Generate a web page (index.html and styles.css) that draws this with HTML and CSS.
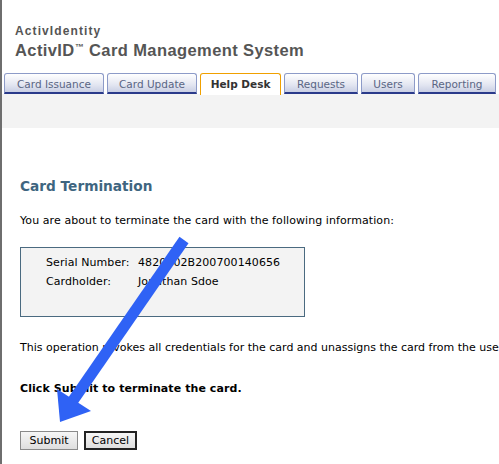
FILE: index.html
```html
<!DOCTYPE html>
<html>
<head>
<title>Card Termination</title>
<link rel="stylesheet" href="styles.css">
</head>
<body>
	<div class="page">
		<header class="brand">
			<div class="company">ActivIdentity</div>
			<div class="product">ActivID<sup>™</sup> Card Management System</div>
		</header>
		<nav class="tabs">
			<a class="tab" style="width:100px">Card Issuance</a>
			<a class="tab" style="width:90px">Card Update</a>
			<a class="tab active" style="width:81px">Help Desk</a>
			<a class="tab" style="width:74px">Requests</a>
			<a class="tab" style="width:54px">Users</a>
			<a class="tab" style="width:78px">Reporting</a>
			<a class="tab" style="width:40px"></a>
		</nav>
		<div class="band"></div>
		<section class="content">
			<h2>Card Termination</h2>
			<p>You are about to terminate the card with the following information:</p>
			<div class="infobox">
				<div class="row"><span class="key">Serial Number:</span><span>4820002B200700140656</span></div>
				<div class="row"><span class="key">Cardholder:</span><span>Jonathan Sdoe</span></div>
			</div>
			<p class="warn">This operation revokes all credentials for the card and unassigns the card from the user.</p>
			<p class="bold">Click Submit to terminate the card.</p>
			<div class="buttons">
				<button class="btn" type="button">Submit</button>
				<button class="btn default" type="button">Cancel</button>
			</div>
		</section>
	</div>
	<svg class="arrow" width="499" height="464" viewBox="0 0 499 464">
		<line x1="184" y1="240" x2="72" y2="402" stroke="#2f62f5" stroke-width="11"/>
		<polygon points="60,422 57,389 91,411" fill="#2f62f5"/>
	</svg>
</body>
</html>
```

FILE: styles.css
```css
body{
	margin:0;
	font-family:"DejaVu Sans", Verdana, sans-serif;
	font-size:11px;
	color:#000;
	background:#fff;
	overflow:hidden;
}
.page{
	border-left:2px solid #6e6e6e;
	height:464px;
	box-sizing:border-box;
	width:499px;
	overflow:hidden;
}
.brand{
	padding:24px 0 0 13px;
	color:#555;
	font-weight:bold;
	font-family:"Liberation Sans", Arial, sans-serif;
}
.company{
	font-size:12px;
	line-height:15px;
	letter-spacing:1.1px;
}
.product{
	font-size:16.5px;
	line-height:22px;
	letter-spacing:0.4px;
}
.product sup{
	font-size:9px;
	vertical-align:6px;
	line-height:0;
}
.tabs{
	display:flex;
	gap:3px;
	margin-top:12px;
	padding-left:2px;
	height:21px;
	width:560px;
}
.tab{
	display:block;
	box-sizing:border-box;
	height:21px;
	border:1px solid #8d9bc8;
	border-bottom:2px solid #2a3a8a;
	border-radius:3px 3px 0 0;
	background:linear-gradient(#ffffff, #e3e6f1 60%, #c9cfe4);
	color:#5a6684;
	text-align:center;
	line-height:20px;
	font-size:10.5px;
	flex:none;
}
.tab.active{
	border:1px solid #f0a000;
	border-bottom:none;
	background:#fff;
	color:#333;
	font-weight:bold;
	height:22px;
	position:relative;
	z-index:1;
}
.band{
	background:#f3f3f3;
	height:34px;
}
.content{
	padding:49px 0 0 18px;
}
h2{
	font-size:13.7px;
	color:#3e6580;
	margin:0 0 19px;
	line-height:18px;
}
p{
	margin:0;
	line-height:14px;
	white-space:nowrap;
	letter-spacing:0.08px;
}
.infobox{
	margin-top:19px;
	width:285px;
	height:70px;
	box-sizing:border-box;
	border:1px solid #4a6a80;
	background:#f3f3f3;
	padding:5px 0 0 25px;
}
.row{
	line-height:19px;
	display:flex;
	letter-spacing:0.08px;
}
.key{
	width:92px;
}
.warn{
	margin-top:24px;
	letter-spacing:0;
}
.bold{
	font-weight:bold;
	margin-top:27px;
}
.buttons{
	margin-top:35px;
	display:flex;
	gap:6px;
}
.btn{
	font-family:"DejaVu Sans", Verdana, sans-serif;
	font-size:11px;
	height:19px;
	width:58px;
	padding:0;
	background:linear-gradient(#f6f6f6, #dedede);
	border:1px solid #8a8a8a;
	border-radius:0;
	color:#000;
	line-height:14px;
}
.btn.default{
	border:2px solid #222;
	width:53px;
}
.arrow{
	position:absolute;
	left:0;
	top:0;
	pointer-events:none;
}
```
